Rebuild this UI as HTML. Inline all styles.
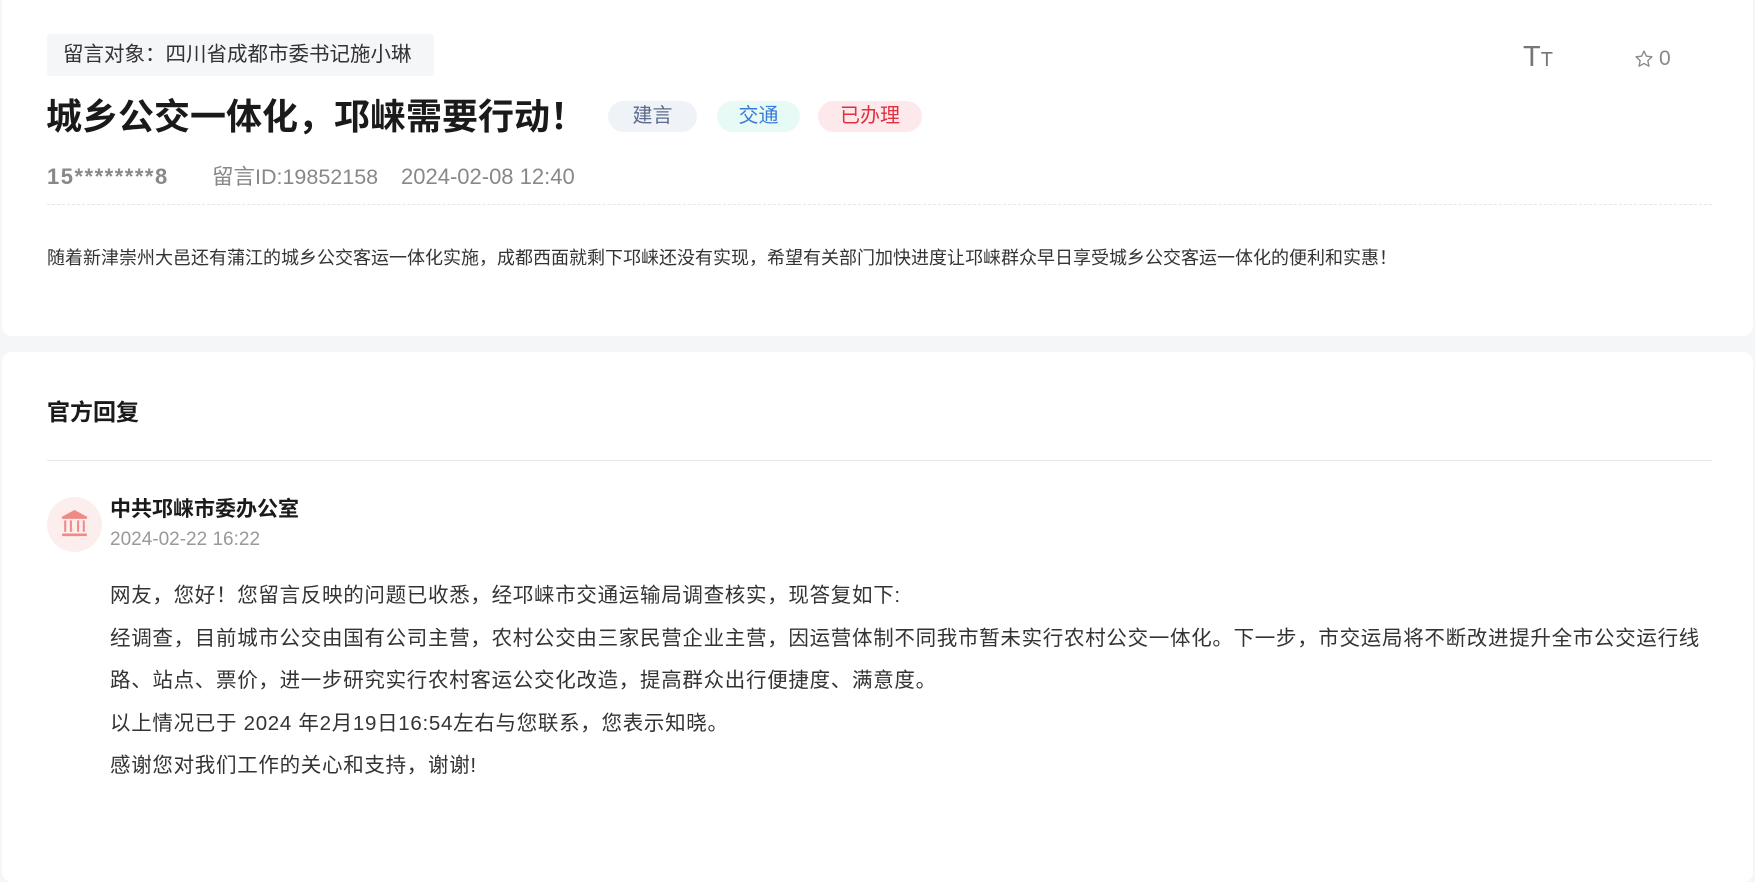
<!DOCTYPE html>
<html><head><meta charset="utf-8"><style>
*{margin:0;padding:0;box-sizing:border-box}
body{width:1755px;height:862px;background:#f5f6f8;font-family:"Liberation Sans","Noto Sans CJK SC",sans-serif;color:#333;position:relative;overflow:hidden}
.card{position:absolute;left:2px;width:1751px;background:#fff;border-radius:10px}
.a{position:absolute;white-space:nowrap}
.chip{position:absolute;top:101px;height:31px;border-radius:16px;font-size:20px;line-height:31px;text-align:center}
</style></head><body>
<div class="card" style="top:-10px;height:346px"></div>
<div class="card" style="top:352px;height:530px"></div>

<div class="a" style="left:47px;top:34px;width:387px;height:42px;background:#f5f6f8;border-radius:3px;font-size:20.5px;line-height:42px;padding-left:16px;color:#333">留言对象：四川省成都市委书记施小琳</div>
<div class="a" style="left:46px;top:95px;font-size:36px;font-weight:bold;color:#1a1a1a;line-height:44px">城乡公交一体化，邛崃需要行动！</div>
<div class="chip" style="left:608px;width:89px;background:#eff2f7;color:#5a6b8c">建言</div>
<div class="chip" style="left:717px;width:83px;background:#e8faf6;color:#3a7bd5">交通</div>
<div class="chip" style="left:818px;width:104px;background:#fde9ec;color:#e0303f">已办理</div>

<div class="a" style="left:1523px;top:42px;font-size:29px;color:#777;line-height:30px">T<span style="font-size:20px">T</span></div>
<svg class="a" style="left:1634px;top:49px" width="20" height="20" viewBox="0 0 24 24"><path d="M12 2.5l2.9 6.1 6.6.8-4.9 4.6 1.3 6.6L12 17.3 6.1 20.6l1.3-6.6L2.5 9.4l6.6-.8z" fill="none" stroke="#888" stroke-width="1.6" stroke-linejoin="round"/></svg>
<div class="a" style="left:1659px;top:46px;font-size:21px;color:#888;line-height:26px">0</div>

<div class="a" style="left:47px;top:164px;font-size:22px;line-height:26px;color:#888;font-weight:bold;letter-spacing:1.5px">15********8</div>
<div class="a" style="left:212px;top:164px;font-size:21.5px;line-height:26px;color:#888">留言ID:19852158</div>
<div class="a" style="left:401px;top:164px;font-size:22px;line-height:26px;color:#888">2024-02-08 12:40</div>
<div class="a" style="left:47px;top:204px;width:1665px;border-top:1px dashed #e6e6e6"></div>
<div class="a" style="left:47px;top:246px;font-size:18px;line-height:24px;color:#333">随着新津崇州大邑还有蒲江的城乡公交客运一体化实施，成都西面就剩下邛崃还没有实现，希望有关部门加快进度让邛崃群众早日享受城乡公交客运一体化的便利和实惠！</div>

<div class="a" style="left:47px;top:398px;font-size:23px;font-weight:bold;color:#1a1a1a;line-height:28px">官方回复</div>
<div class="a" style="left:47px;top:460px;width:1665px;border-top:1px solid #e8e8e8"></div>

<div class="a" style="left:47px;top:497px;width:55px;height:55px;border-radius:50%;background:#fdeeee"></div>
<svg class="a" style="left:58px;top:507px" width="33" height="33" viewBox="0 0 32 32" fill="none" stroke="#ef8a86" stroke-width="2"><path d="M16 4L4 10.5h24z" fill="#ef8a86"/><path d="M7 13v11M12.5 13v11M19.5 13v11M25 13v11"/><path d="M4 27h24" stroke-width="2.5"/></svg>
<div class="a" style="left:110px;top:497px;font-size:21px;font-weight:bold;color:#1a1a1a;line-height:26px">中共邛崃市委办公室</div>
<div class="a" style="left:110px;top:529px;font-size:19px;color:#999;line-height:22px">2024-02-22 16:22</div>

<div class="a" style="left:110px;top:575px;width:1604px;white-space:normal;font-size:20.5px;letter-spacing:0.7px;line-height:42.5px;color:#333">网友，您好！您留言反映的问题已收悉，经邛崃市交通运输局调查核实，现答复如下:<br>经调查，目前城市公交由国有公司主营，农村公交由三家民营企业主营，因运营体制不同我市暂未实行农村公交一体化。下一步，市交运局将不断改进提升全市公交运行线路、站点、票价，进一步研究实行农村客运公交化改造，提高群众出行便捷度、满意度。<br>以上情况已于 2024 年2月19日16:54左右与您联系，您表示知晓。<br>感谢您对我们工作的关心和支持，谢谢!</div>
</body></html>
